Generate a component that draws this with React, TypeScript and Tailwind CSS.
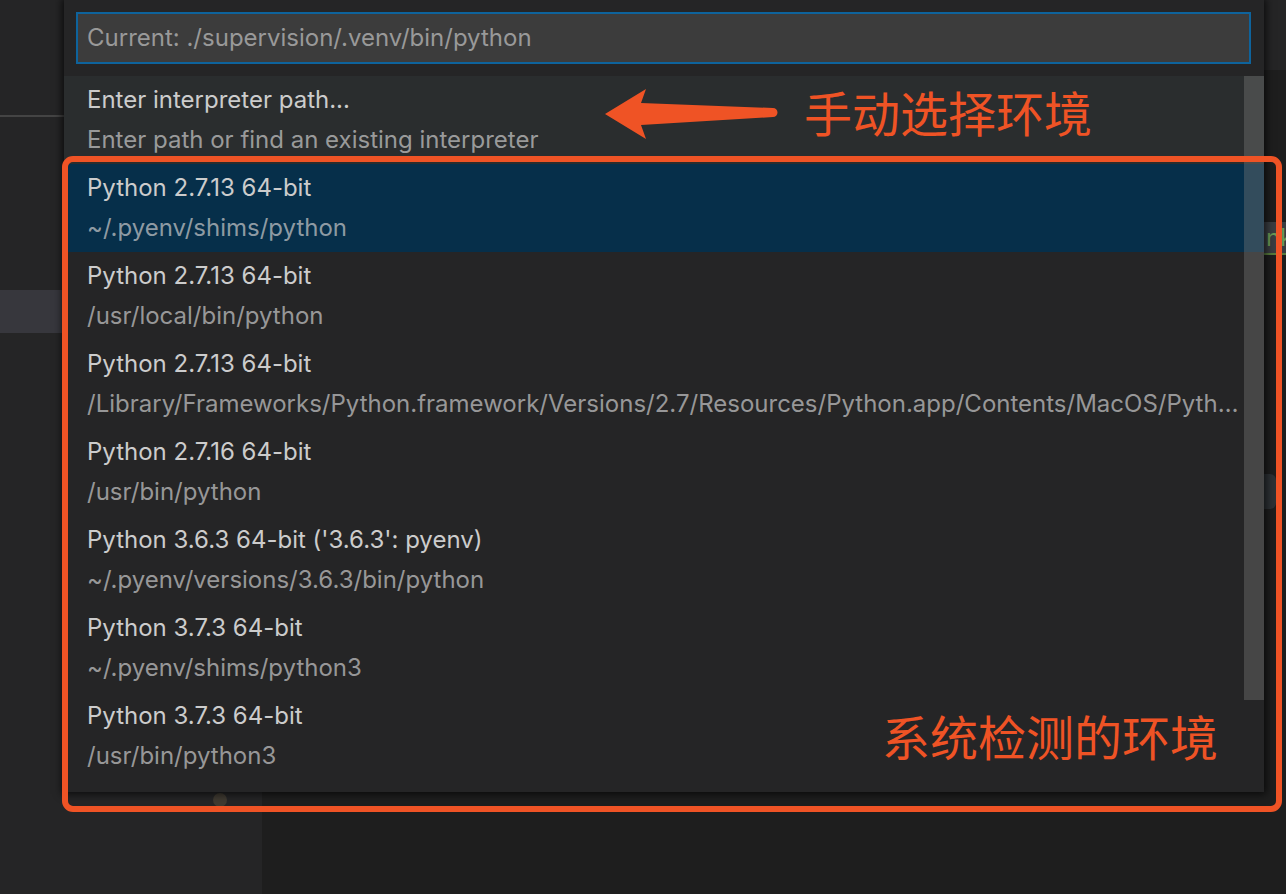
import React from "react";

interface Interpreter {
    label: string;
    path: string;
}

const interpreters: Interpreter[] = [
    { label: "Python 2.7.13 64-bit", path: "~/.pyenv/shims/python" },
    { label: "Python 2.7.13 64-bit", path: "/usr/local/bin/python" },
    {
        label: "Python 2.7.13 64-bit",
        path: "/Library/Frameworks/Python.framework/Versions/2.7/Resources/Python.app/Contents/MacOS/Python",
    },
    { label: "Python 2.7.16 64-bit", path: "/usr/bin/python" },
    { label: "Python 3.6.3 64-bit ('3.6.3': pyenv)", path: "~/.pyenv/versions/3.6.3/bin/python" },
    { label: "Python 3.7.3 64-bit", path: "~/.pyenv/shims/python3" },
    { label: "Python 3.7.3 64-bit", path: "/usr/bin/python3" },
];

const uiFont = { fontFamily: "Inter, 'Noto Sans', sans-serif" };
const cjkFont = { fontFamily: "'Noto Sans CJK SC', sans-serif" };

const PickRow = ({ label, path, selected, hovered }: Interpreter & { selected?: boolean; hovered?: boolean }) => (
    <div
        className={`h-[88px] pt-[3px] pl-[23px] pr-[20px] ${
            selected ? "bg-[#062f4a]" : hovered ? "bg-[#2a2d2e]" : ""
        }`}
    >
        <div className="leading-[42px] text-[#cccccc] truncate">{label}</div>
        <div className="leading-[38px] text-[#cccccc]/70 truncate">{path}</div>
    </div>
);

export default function App() {
    return (
        <div className="relative w-[1286px] h-[894px] overflow-hidden bg-[#1e1e1e] flex" style={uiFont}>
            {/* sidebar */}
            <div className="w-[262px] shrink-0 h-full bg-[#252526] flex flex-col">
                <div className="h-[115px]" />
                <div className="h-[2px] bg-[#444444]" />
                <div className="h-[173px]" />
                <div className="h-[43px] bg-[#37373d]" />
                <div className="h-[460px]" />
                <div className="ml-[213px] w-[14px] h-[14px] rounded-full bg-[#3f3a31]" />
            </div>

            {/* editor */}
            <div className="flex-1 min-w-0 flex flex-col">
                <div className="h-[70px] bg-[#252526]" />
                <div className="h-[152px]" />
                <div className="ml-[1002px] h-[33px] bg-[#3a3d41] border-b-2 border-[#587c3c] text-[#6a9955] text-[24px] leading-[31px] pl-[2px] overflow-hidden whitespace-nowrap">
                    nk
                </div>
                <div className="h-[219px]" />
                <div className="ml-[1002px] w-[12px] h-[35px] bg-[#2d3135] rounded-r-md" />
            </div>

            {/* quick pick */}
            <div className="absolute left-[64px] top-0 w-[1200px] bg-[#252526] shadow-[0_0_8px_2px_rgba(0,0,0,0.7)] text-[24px]">
                <div className="px-[12px] pt-[12px] pb-[12px] pr-[13px]">
                    <div className="h-[52px] bg-[#3c3c3c] border-2 border-[#0e639c] pl-[9px] flex items-center text-[#999999]">
                        Current: ./supervision/.venv/bin/python
                    </div>
                </div>
                <div className="relative">
                    <PickRow
                        label="Enter interpreter path..."
                        path="Enter path or find an existing interpreter"
                        hovered
                    />
                    {interpreters.map((it, i) => (
                        <PickRow key={i} label={it.label} path={it.path} selected={i === 0} />
                    ))}
                    <div className="absolute right-0 top-0 w-[20px] h-[624px] bg-[#797979]/40" />
                </div>
                <div className="h-[12px]" />
            </div>

            {/* annotations */}
            <div className="absolute left-[62px] top-[156px] w-[1220px] h-[656px] border-[6px] border-[#ef5325] rounded-[11px]" />
            <svg className="absolute left-0 top-0 pointer-events-none" width="1286" height="894">
                <path
                    d="M605 114 L646 89 L641 103 L773 108 A4.5 4.5 0 0 1 773 117 L641 125 L646 139 Z"
                    fill="#ef5325"
                />
            </svg>
            <div className="absolute left-[804px] top-[86px] text-[48px] leading-[50px] text-[#ef5325]" style={cjkFont}>
                手动选择环境
            </div>
            <div className="absolute left-[882px] top-[710px] text-[48px] leading-[50px] text-[#ef5325]" style={cjkFont}>
                系统检测的环境
            </div>
        </div>
    );
}
